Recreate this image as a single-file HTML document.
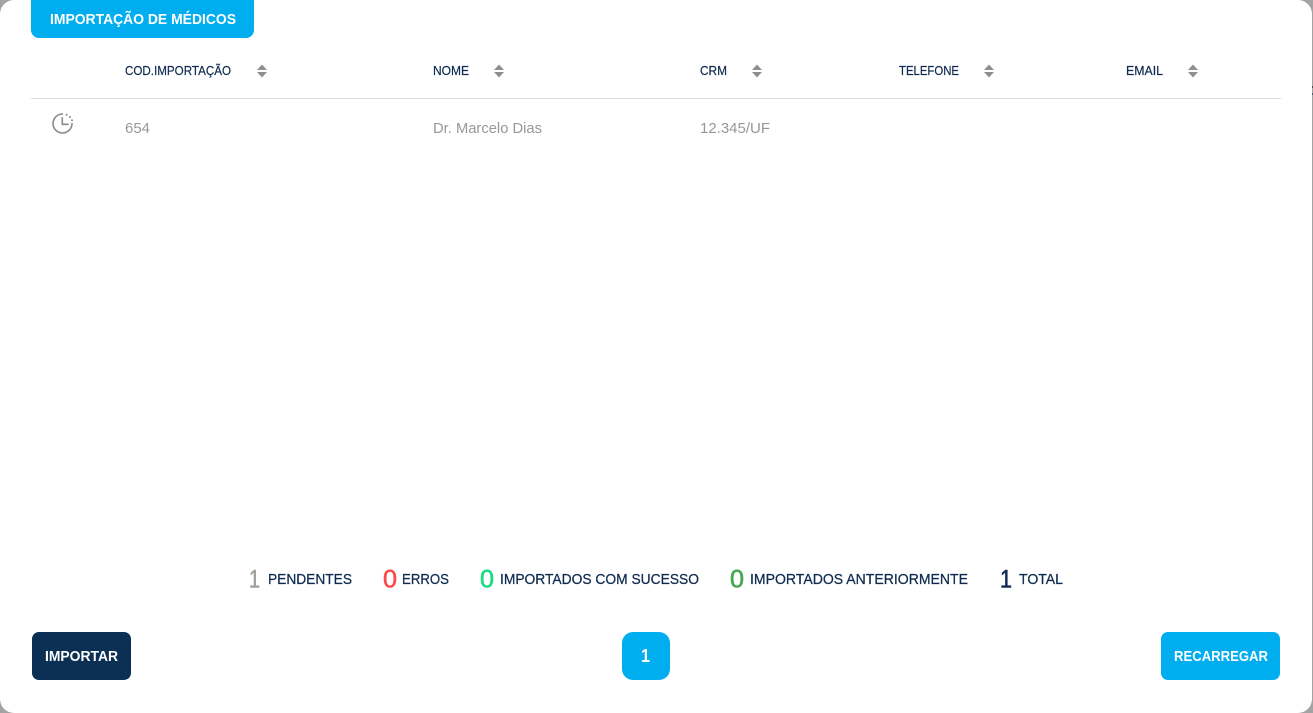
<!DOCTYPE html>
<html lang="pt">
<head>
<meta charset="utf-8">
<title>Importação de Médicos</title>
<style>
html,body{margin:0;padding:0;width:1313px;height:713px;overflow:hidden;background:#a3a3a3;}
#m{position:absolute;left:0;top:0;width:1312px;height:713px;background:#fff;border-radius:14px;overflow:hidden;}
.b{position:absolute;}
svg{position:absolute;left:0;top:0;}
text{font-family:"Liberation Sans",sans-serif;}
</style>
</head>
<body>
<div id="m">
  <div class="b" style="left:31px;top:0;width:223px;height:38px;background:#00aeef;border-radius:0 0 8px 8px;"></div>
  <div class="b" style="left:32px;top:632px;width:99px;height:48px;background:#0b3054;border-radius:7px;"></div>
  <div class="b" style="left:622px;top:632px;width:48px;height:48px;background:#00aeef;border-radius:11px;"></div>
  <div class="b" style="left:1161px;top:632px;width:119px;height:48px;background:#00aeef;border-radius:7px;"></div>
  <div class="b" style="left:31px;top:98px;width:1250px;height:1px;background:#dedede;"></div>
</div>
<div class="b" style="left:1312px;top:86px;width:1px;height:2px;background:#4a4a4a;"></div>
<div class="b" style="left:1312px;top:93px;width:1px;height:2px;background:#4a5a70;"></div>
<svg width="1313" height="713" viewBox="0 0 1313 713" xmlns="http://www.w3.org/2000/svg">
  <text x="50" y="24" font-size="14.500" font-weight="700" fill="#fff" textLength="186" lengthAdjust="spacingAndGlyphs">IMPORTAÇÃO DE MÉDICOS</text>

  <g font-size="12.500" fill="#0f2b50" stroke="#0f2b50" stroke-width=".2">
    <text x="125" y="75" textLength="106" lengthAdjust="spacingAndGlyphs">COD.IMPORTAÇÃO</text>
    <text x="433" y="75" textLength="36" lengthAdjust="spacingAndGlyphs">NOME</text>
    <text x="700" y="75" textLength="27" lengthAdjust="spacingAndGlyphs">CRM</text>
    <text x="899" y="75" textLength="60" lengthAdjust="spacingAndGlyphs">TELEFONE</text>
    <text x="1126" y="75" textLength="37" lengthAdjust="spacingAndGlyphs">EMAIL</text>
  </g>

  <g fill="#8f8f8f">
    <path d="M257 70l5-5.500 5 5.500z M257 72l5 5.500 5-5.500z"/>
    <path d="M494 70l5-5.500 5 5.500z M494 72l5 5.500 5-5.500z"/>
    <path d="M752 70l5-5.500 5 5.500z M752 72l5 5.500 5-5.500z"/>
    <path d="M984 70l5-5.500 5 5.500z M984 72l5 5.500 5-5.500z"/>
    <path d="M1188 70l5-5.500 5 5.500z M1188 72l5 5.500 5-5.500z"/>
  </g>

  <g fill="none" stroke="#8a8a8a" stroke-width="1.600" stroke-linecap="round">
    <path d="M62.500 114A9.500 9.500 0 1 0 72 123.500"/>
    <path d="M62.300 117.800V124.300H68"/>
  </g>
  <g fill="#8a8a8a">
    <circle cx="66.500" cy="114.800" r="1"/>
    <circle cx="70" cy="117" r="1"/>
    <circle cx="72" cy="120.300" r="1"/>
  </g>

  <g font-size="14.500" fill="#979797">
    <text x="125" y="133" textLength="25" lengthAdjust="spacingAndGlyphs">654</text>
    <text x="433" y="133" textLength="109" lengthAdjust="spacingAndGlyphs">Dr. Marcelo Dias</text>
    <text x="700" y="133" textLength="70" lengthAdjust="spacingAndGlyphs">12.345/UF</text>
  </g>

  <g font-size="25" stroke-width=".6">
    <text x="249" y="587.500" fill="#a3a09a" stroke="#a3a09a" textLength="11" lengthAdjust="spacingAndGlyphs">1</text>
    <text x="383" y="587.500" fill="#fb4b4b" stroke="#fb4b4b" textLength="14" lengthAdjust="spacingAndGlyphs">0</text>
    <text x="480" y="587.500" fill="#16dc82" stroke="#16dc82" textLength="14" lengthAdjust="spacingAndGlyphs">0</text>
    <text x="730" y="587.500" fill="#43a84f" stroke="#43a84f" textLength="14" lengthAdjust="spacingAndGlyphs">0</text>
    <text x="1000" y="587.500" fill="#0f2b50" stroke="#0f2b50" textLength="12" lengthAdjust="spacingAndGlyphs">1</text>
  </g>
  <g font-size="14.500" fill="#0f2b50" stroke="#0f2b50" stroke-width=".25">
    <text x="268" y="584" textLength="84" lengthAdjust="spacingAndGlyphs">PENDENTES</text>
    <text x="402" y="584" textLength="47" lengthAdjust="spacingAndGlyphs">ERROS</text>
    <text x="500" y="584" textLength="199" lengthAdjust="spacingAndGlyphs">IMPORTADOS COM SUCESSO</text>
    <text x="750" y="584" textLength="218" lengthAdjust="spacingAndGlyphs">IMPORTADOS ANTERIORMENTE</text>
    <text x="1019" y="584" textLength="44" lengthAdjust="spacingAndGlyphs">TOTAL</text>
  </g>

  <g font-weight="700" fill="#fff">
    <text x="45" y="661" font-size="14.500" textLength="73" lengthAdjust="spacingAndGlyphs">IMPORTAR</text>
    <text x="641" y="662" font-size="18" textLength="9" lengthAdjust="spacingAndGlyphs">1</text>
    <text x="1174" y="661" font-size="14.500" textLength="94" lengthAdjust="spacingAndGlyphs">RECARREGAR</text>
  </g>
</svg>
</body>
</html>
